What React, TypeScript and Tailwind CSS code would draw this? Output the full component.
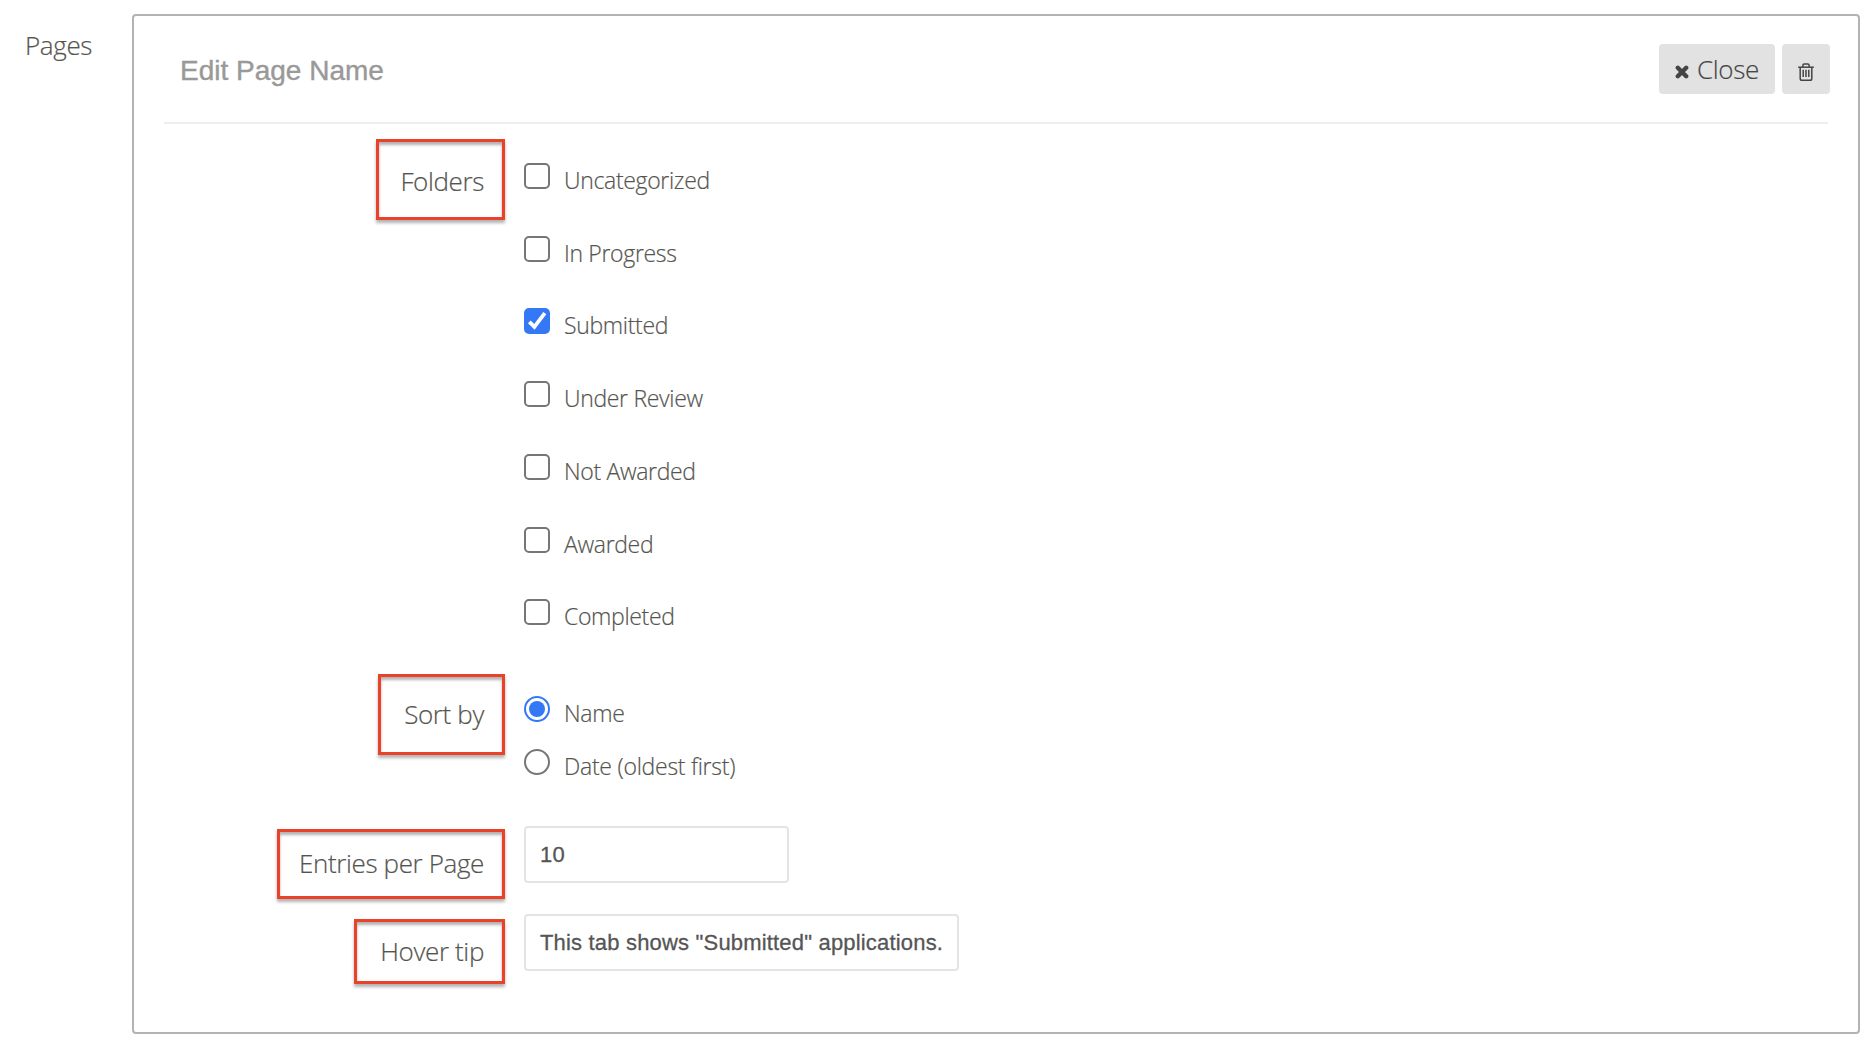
import { ReactNode } from "react";
import clsx from "clsx";

type TOption = {
  label: string;
  checked?: boolean;
};

type TFieldRowProps = {
  label: string;
  className: string;
  labelClassName: string;
  children: ReactNode;
};

const folders: TOption[] = [
  { label: "Uncategorized" },
  { label: "In Progress" },
  { label: "Submitted", checked: true },
  { label: "Under Review" },
  { label: "Not Awarded" },
  { label: "Awarded" },
  { label: "Completed" },
];

const sortOptions: TOption[] = [
  { label: "Name", checked: true },
  { label: "Date (oldest first)" },
];

function CloseIcon() {
  return (
    <svg width="14" height="14" viewBox="0 0 14 14" className="mt-[6px]">
      <path
        d="M2.8 2.8L11.2 11.2M11.2 2.8L2.8 11.2"
        stroke="#444"
        strokeWidth="4.4"
        strokeLinecap="round"
      />
    </svg>
  );
}

function TrashIcon() {
  return (
    <svg
      width="16"
      height="18"
      viewBox="0 0 16 18"
      fill="none"
      stroke="#444"
      strokeWidth="1.5"
      className="mt-[6px]"
    >
      <path d="M0.2 4.2H15.8" />
      <path d="M4.9 4V2.2Q4.9 0.9 6.2 0.9H9.8Q11.1 0.9 11.1 2.2V4" />
      <path d="M2.2 4.2V15.4Q2.2 17.2 3.9 17.2H12.1Q13.8 17.2 13.8 15.4V4.2" />
      <path d="M5.2 6.8V14M8 6.8V14M10.8 6.8V14" />
    </svg>
  );
}

function Checkbox({ label, checked }: TOption) {
  return (
    <label className="flex h-10 items-start">
      <span
        className={clsx(
          "mt-[3px] flex size-[26px] shrink-0 items-center justify-center rounded-[5px]",
          checked ? "bg-[#3478f6]" : "border-2 border-[#767676] bg-white"
        )}
      >
        {checked && (
          <svg width="26" height="26" viewBox="0 0 26 26" fill="none">
            <path d="M5.3 13.8L10.4 18.8L20.8 5.2" stroke="#fff" strokeWidth="3.8" />
          </svg>
        )}
      </span>
      <span className="ml-[14px] text-[23px] leading-10 tracking-[-0.33px]">{label}</span>
    </label>
  );
}

function Radio({ label, checked }: TOption) {
  return (
    <label className="flex h-10 items-start">
      <span
        className={clsx(
          "mt-[3px] flex size-[26px] shrink-0 items-center justify-center rounded-full border-2 bg-white",
          checked ? "border-[#3478f6]" : "border-[#767676]"
        )}
      >
        {checked && <span className="size-4 rounded-full bg-[#3478f6]" />}
      </span>
      <span className="ml-[14px] text-[23px] leading-10 tracking-[-0.26px]">{label}</span>
    </label>
  );
}

function FieldRow({ label, className, labelClassName, children }: TFieldRowProps) {
  return (
    <div className={clsx("flex items-start", className)}>
      <div className="flex w-[341px] shrink-0 justify-end">
        <div
          className={clsx(
            "border-3 border-[#ea4228] pr-[18px] text-right text-[26px] leading-10 tracking-[-0.37px] whitespace-nowrap shadow-[0_3px_3px_rgba(0,0,0,0.3),inset_0_3px_3px_rgba(0,0,0,0.3)]",
            labelClassName
          )}
        >
          {label}
        </div>
      </div>
      <div className="ml-[19px]">{children}</div>
    </div>
  );
}

export default function App() {
  const inputClass =
    "block h-[57px] rounded-[4px] border-2 border-[#e4e4e4] bg-white px-[14px] font-['Liberation_Sans',sans-serif] text-[22px] font-normal tracking-[0.18px] text-[#555] outline-none [-webkit-text-stroke:0.3px_#555]";

  return (
    <div className="flex h-[1042px] w-[1870px] items-start overflow-hidden bg-white pt-[14px] font-['Open_Sans',sans-serif] font-light text-[#555550] [-webkit-text-stroke:0.2px_#555550]">
      <div className="w-[132px] shrink-0 pt-[11px] pl-[25px] text-[26px] leading-10 tracking-[-0.35px]">
        Pages
      </div>
      <div className="h-[1020px] w-[1728px] shrink-0 rounded-[4px] border-2 border-[#b3b3b3] px-[30px]">
        <div className="flex h-[108px] items-start border-b-2 border-[#eeeeee] pt-7 pl-4">
          <h2 className="flex-1 pt-[7px] font-['Liberation_Sans',sans-serif] text-[28px] leading-10 font-normal text-[#999] [-webkit-text-stroke:0.4px_#999]">
            Edit Page Name
          </h2>
          <button className="flex h-[50px] w-[116px] items-center justify-center gap-2 rounded-[4px] bg-[#e2e2e2] text-[26px] leading-10 tracking-[-0.35px] text-[#444]">
            <CloseIcon />
            <span>Close</span>
          </button>
          <button className="-mr-[2px] ml-[7px] flex h-[50px] w-12 items-center justify-center rounded-[4px] bg-[#e2e2e2]">
            <TrashIcon />
          </button>
        </div>
        <FieldRow
          label="Folders"
          className="mt-[15px] h-[535px]"
          labelClassName="h-[81px] w-[129px] pt-[19px]"
        >
          <div className="flex flex-col gap-[32.78px] pt-[20.9px]">
            {folders.map((item) => (
              <Checkbox key={item.label} {...item} />
            ))}
          </div>
        </FieldRow>
        <FieldRow
          label="Sort by"
          className="h-[152px]"
          labelClassName="h-[81px] w-[127px] pt-[17px]"
        >
          <div className="flex flex-col gap-[13px] pt-[19px]">
            {sortOptions.map((item) => (
              <Radio key={item.label} {...item} />
            ))}
          </div>
        </FieldRow>
        <FieldRow
          label="Entries per Page"
          className="h-[88px]"
          labelClassName="mt-[3px] h-[70px] w-[228px] pt-[11px]"
        >
          <input className={clsx(inputClass, "w-[265px]")} defaultValue="10" />
        </FieldRow>
        <FieldRow
          label="Hover tip"
          className="h-[72px]"
          labelClassName="mt-[5px] h-[65px] w-[151px] pt-[9px]"
        >
          <input
            className={clsx(inputClass, "w-[435px]")}
            defaultValue={'This tab shows "Submitted" applications.'}
          />
        </FieldRow>
      </div>
    </div>
  );
}
